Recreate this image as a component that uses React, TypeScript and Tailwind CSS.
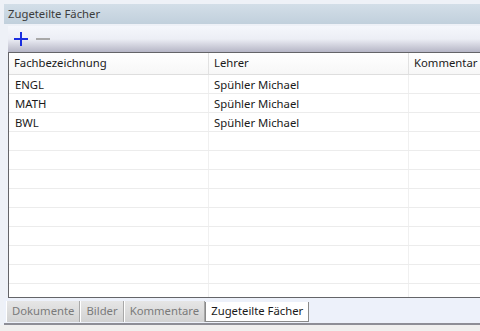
import React from 'react';

const rows = [
  { fach: 'ENGL', lehrer: 'Spühler Michael', kommentar: '' },
  { fach: 'MATH', lehrer: 'Spühler Michael', kommentar: '' },
  { fach: 'BWL', lehrer: 'Spühler Michael', kommentar: '' },
];

const tabs = ['Dokumente', 'Bilder', 'Kommentare', 'Zugeteilte Fächer'];

export default function App() {
  // pad with empty rows so the grid fills the panel
  const allRows = [...rows];
  while (allRows.length < 12) allRows.push({ fach: '', lehrer: '', kommentar: '' });

  return (
    <div
      className="w-[480px] h-[331px] overflow-hidden bg-[#eef1f7] flex flex-col text-[11.3px] text-[#1a1a1a]"
      style={{ fontFamily: '"Segoe UI", "Noto Sans", "Liberation Sans", sans-serif' }}
    >
      {/* Title bar */}
      <div className="mt-1 ml-1 h-[20px] flex items-center pl-1 bg-gradient-to-b from-[#d3dee8] to-[#c1d0dc] text-[#3c3c3c]">
        Zugeteilte Fächer
      </div>

      {/* Toolbar */}
      <div className="mt-[2px] ml-2 h-[26px] flex items-center gap-2 pl-[6px] bg-gradient-to-b from-[#f5f7fc] via-[#eceef5] to-[#b6b6c6]">
        <svg width="14" height="14" viewBox="0 0 14 14">
          <rect x="0" y="6" width="14" height="2" fill="#1a2ee0" />
          <rect x="6" y="0" width="2" height="14" fill="#1a2ee0" />
        </svg>
        <svg width="14" height="14" viewBox="0 0 14 14">
          <rect x="0" y="6" width="14" height="2" fill="#a8a8a8" />
        </svg>
      </div>

      {/* Table */}
      <div className="ml-2 h-[246px] bg-white border-t-[1px] border-l-[1px] border-b-[1px] border-[#646468] flex flex-col overflow-hidden">
        <div className="h-[22px] flex shrink-0 border-b border-[#dedede] bg-gradient-to-b from-white to-[#f7f7f7]">
          <div className="w-[200px] border-r border-[#e2e2e2] flex items-center pl-[5px]">Fachbezeichnung</div>
          <div className="w-[200px] border-r border-[#e2e2e2] flex items-center pl-[5px]">Lehrer</div>
          <div className="flex-1 flex items-center pl-[5px] whitespace-nowrap">Kommentar</div>
        </div>
        {allRows.map((r, i) => (
          <div key={i} className="h-[19px] flex shrink-0 border-b border-[#ececec]">
            <div className="w-[200px] border-r border-[#f0f0f0] flex items-center pl-[6px] pt-[2px]">{r.fach}</div>
            <div className="w-[200px] border-r border-[#f0f0f0] flex items-center pl-[5px] pt-[2px]">{r.lehrer}</div>
            <div className="flex-1 flex items-center pl-[5px] pt-[2px]">{r.kommentar}</div>
          </div>
        ))}
      </div>

      {/* Tab strip */}
      <div className="h-[27px] ml-1 flex items-start pt-[3px] pl-[2px] bg-[#edf1fa] border-b-2 border-[#8e8e96]">
        {tabs.map((t, i) => {
          const active = i === tabs.length - 1;
          return (
            <div
              key={t}
              className={
                active
                  ? 'h-[20px] mt-[1px] px-[5px] flex items-center bg-white border border-t-0 border-[#8a8a8a] text-[#1a1a1a]'
                  : 'h-[21px] px-[5px] flex items-center bg-gradient-to-b from-[#e6e6e6] to-[#d2d2d2] border-r border-l border-[#ffffff] border-r-[#a8a8a8] text-[#7a7a7a]'
              }
            >
              {t}
            </div>
          );
        })}
      </div>
      <div className="flex-1 bg-[#f0efee]" />
    </div>
  );
}
